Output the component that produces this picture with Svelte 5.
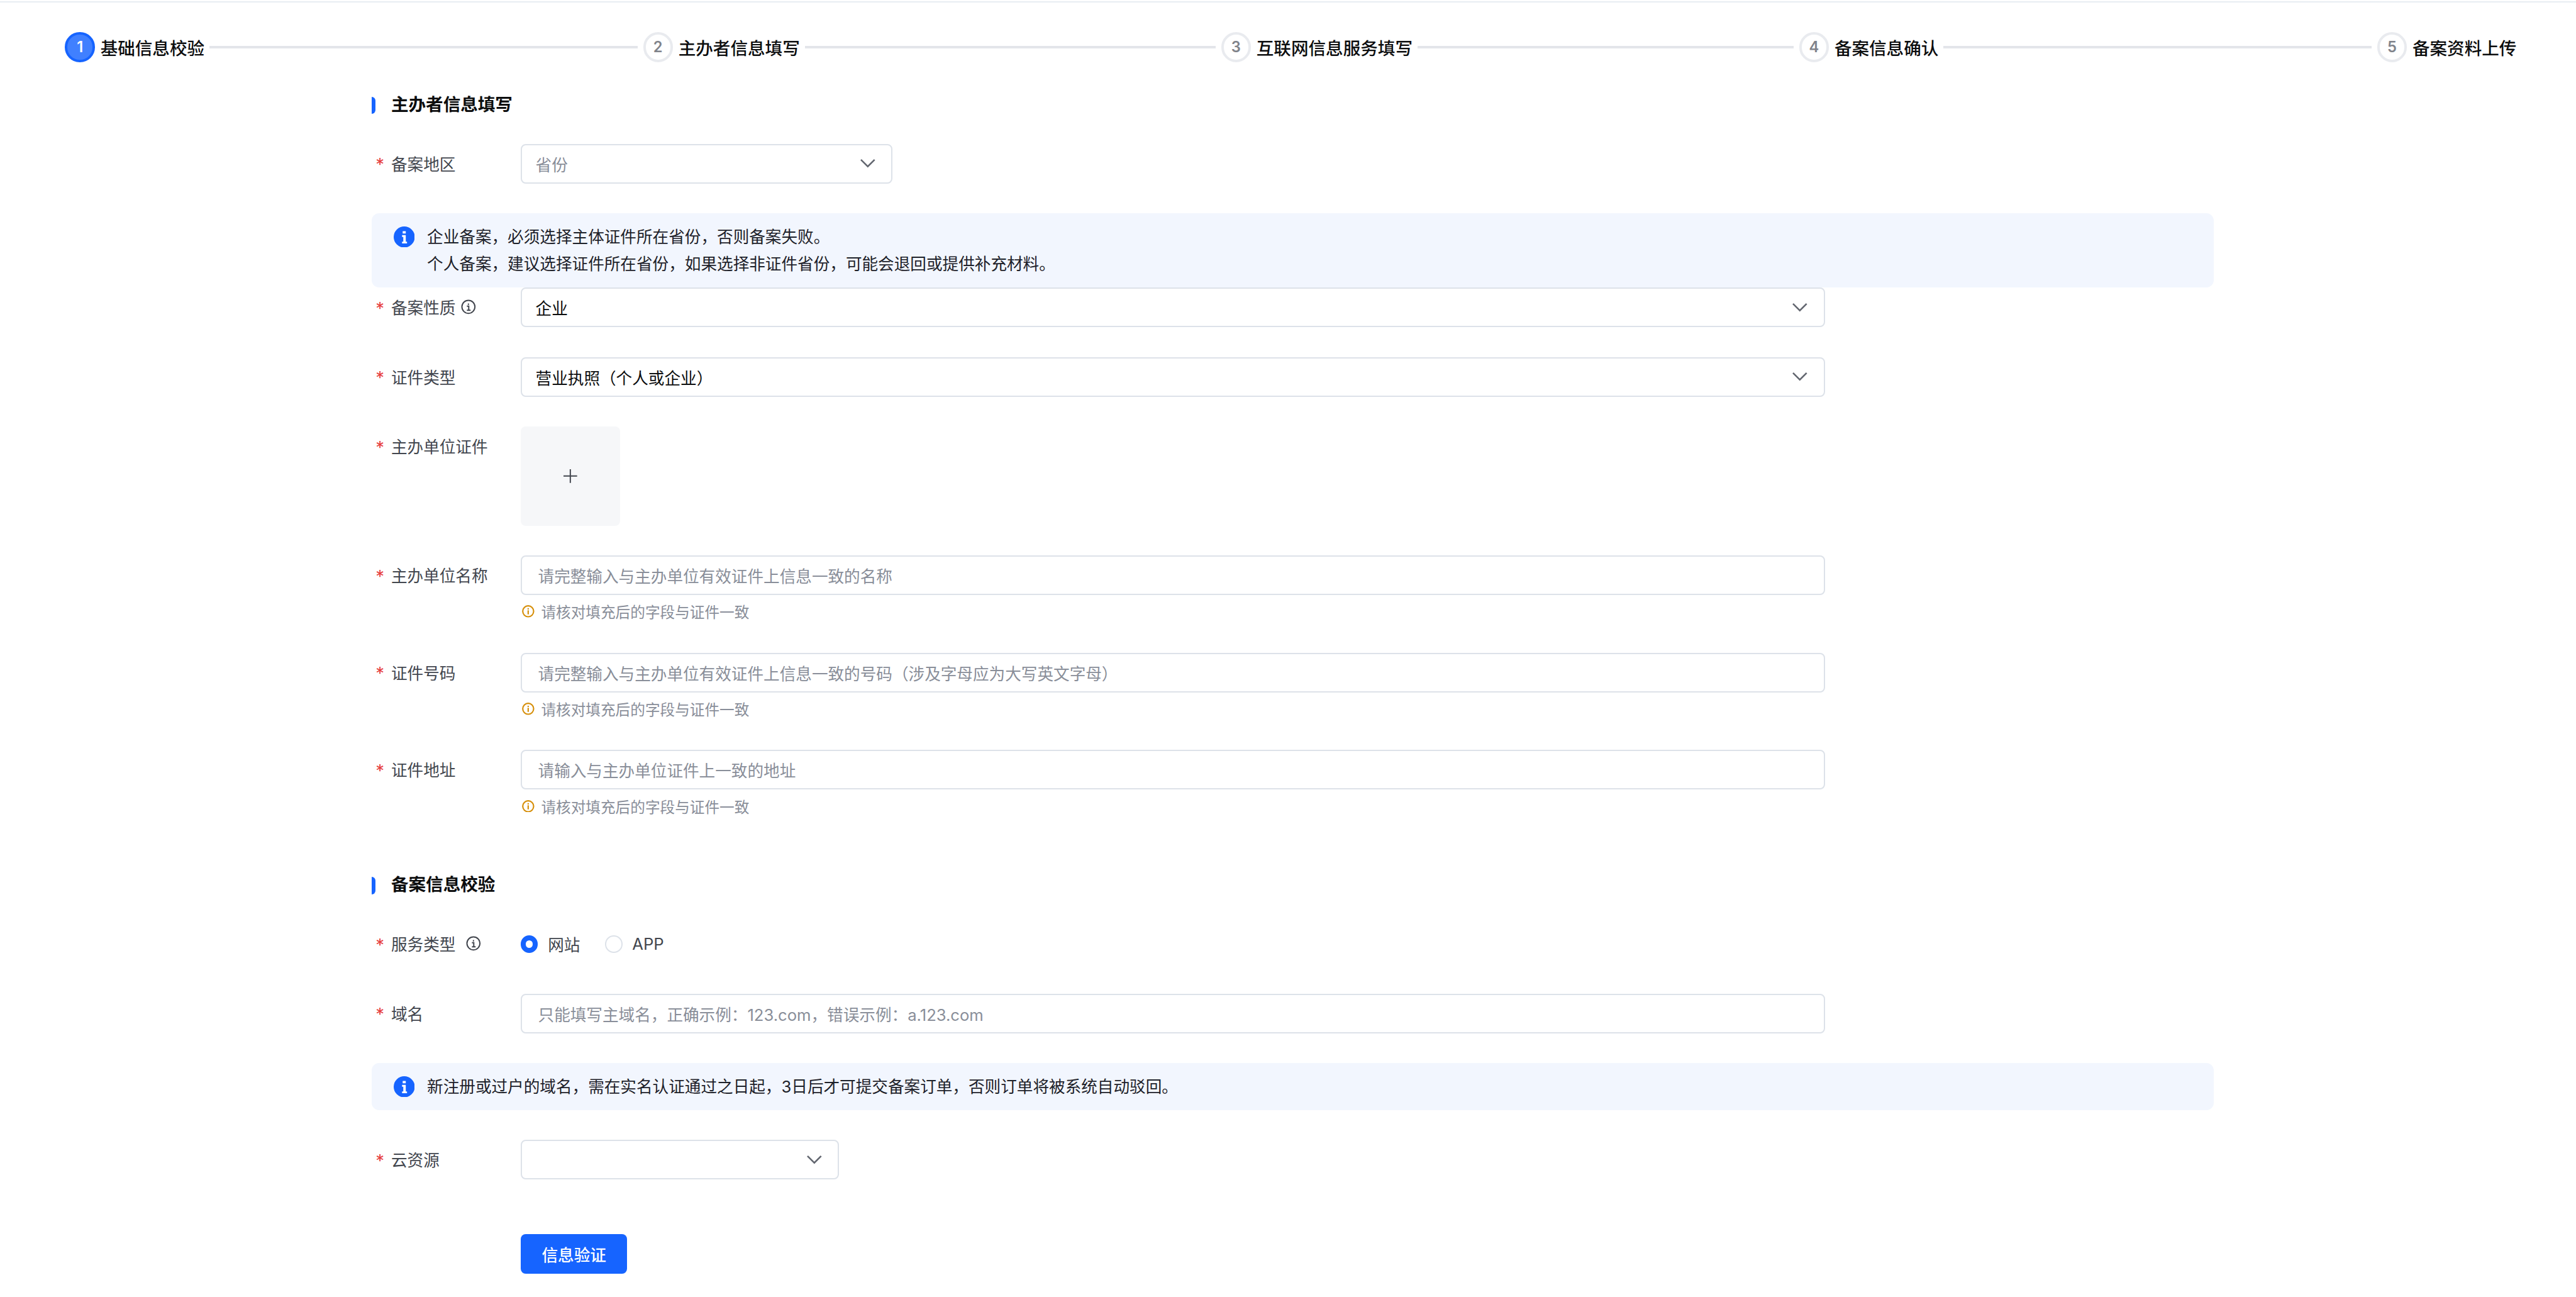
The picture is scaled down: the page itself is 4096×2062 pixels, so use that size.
<script>
  const steps = ["基础信息校验", "主办者信息填写", "互联网信息服务填写", "备案信息确认", "备案资料上传"]
  const hint = "请核对填充后的字段与证件一致"
</script>

{#snippet chevron()}
  <svg class="chevron" viewBox="0 0 24 24" fill="none" stroke="#62666f" stroke-width="2.6">
    <path d="M1 6l11 11L23 6" />
  </svg>
{/snippet}

{#snippet infoFilled()}
  <svg class="alert-icon" viewBox="0 0 34 34">
    <circle cx="17" cy="17" r="17" fill="#1664ff" />
    <path d="M14.5 7.5h5v4h-5zM13.5 14h6v10.5h2v3h-8v-3h2v-7.5h-2z" fill="#fff" />
  </svg>
{/snippet}

{#snippet infoOutline(wide)}
  <svg class="info" class:wide viewBox="0 0 24 24" fill="none" stroke="#42464e" stroke-width="2">
    <circle cx="12" cy="12" r="10.5" />
    <path d="M12 6.5v2.5M9.5 11H12.5V17M9.5 17.5h6" />
  </svg>
{/snippet}

{#snippet fieldHint()}
  <div class="hint">
    <svg class="hint-icon" viewBox="0 0 20 20" fill="none" stroke="#d68f0a" stroke-width="2.2">
      <circle cx="10" cy="10" r="8.8" />
      <path d="M10 5v2M10 8.5v6.5" />
    </svg>
    <span>{hint}</span>
  </div>
{/snippet}

<div class="page">
  <div class="topbar"></div>

  <div class="steps">
    {#each steps as step, i}
      <div class="step" class:last={i === steps.length - 1}>
        <span class="num" class:active={i === 0}>{i + 1}</span>
        <span class="step-text">{step}</span>
        {#if i < steps.length - 1}<span class="line"></span>{/if}
      </div>
    {/each}
  </div>

  <div class="form">
    <h3 class="title">主办者信息填写</h3>

    <div class="row">
      <div class="label"><i>*</i>备案地区</div>
      <div class="select short placeholder"><span>省份</span>{@render chevron()}</div>
    </div>

    <div class="alert">
      {@render infoFilled()}
      <div>
        <div>企业备案，必须选择主体证件所在省份，否则备案失败。</div>
        <div>个人备案，建议选择证件所在省份，如果选择非证件省份，可能会退回或提供补充材料。</div>
      </div>
    </div>

    <div class="row">
      <div class="label"><i>*</i>备案性质{@render infoOutline(false)}</div>
      <div class="select"><span>企业</span>{@render chevron()}</div>
    </div>

    <div class="row">
      <div class="label"><i>*</i>证件类型</div>
      <div class="select"><span>营业执照（个人或企业）</span>{@render chevron()}</div>
    </div>

    <div class="row">
      <div class="label"><i>*</i>主办单位证件</div>
      <div class="upload">
        <svg viewBox="0 0 22 22" fill="none" stroke="#42464e" stroke-width="2">
          <path d="M11 0v22M0 11h22" />
        </svg>
      </div>
    </div>

    <div class="row">
      <div class="label"><i>*</i>主办单位名称</div>
      <div class="field">
        <div class="input placeholder">请完整输入与主办单位有效证件上信息一致的名称</div>
        {@render fieldHint()}
      </div>
    </div>

    <div class="row">
      <div class="label"><i>*</i>证件号码</div>
      <div class="field">
        <div class="input placeholder">请完整输入与主办单位有效证件上信息一致的号码（涉及字母应为大写英文字母）</div>
        {@render fieldHint()}
      </div>
    </div>

    <div class="row">
      <div class="label"><i>*</i>证件地址</div>
      <div class="field">
        <div class="input placeholder">请输入与主办单位证件上一致的地址</div>
        {@render fieldHint()}
      </div>
    </div>

    <h3 class="title second">备案信息校验</h3>

    <div class="row">
      <div class="label"><i>*</i>服务类型{@render infoOutline(true)}</div>
      <div class="radios">
        <span class="radio checked"></span><span class="radio-text">网站</span>
        <span class="radio"></span><span class="radio-text">APP</span>
      </div>
    </div>

    <div class="row">
      <div class="label"><i>*</i>域名</div>
      <div class="input placeholder">只能填写主域名，正确示例：123.com，错误示例：a.123.com</div>
    </div>

    <div class="alert single">
      {@render infoFilled()}
      <div>新注册或过户的域名，需在实名认证通过之日起，3日后才可提交备案订单，否则订单将被系统自动驳回。</div>
    </div>

    <div class="row last">
      <div class="label"><i>*</i>云资源</div>
      <div class="select cloud"><span></span>{@render chevron()}</div>
    </div>

    <div class="actions">
      <button type="button">信息验证</button>
    </div>
  </div>
</div>

<style>
  :global(body) {
    margin: 0;
    background: #fff;
  }

  .page {
    zoom: 0.9856;
    height: 2092px;
    overflow: hidden;
    font-family: Inter, "Noto Sans CJK SC", sans-serif;
    font-size: 26px;
    color: #0c0d0e;
  }

  .topbar {
    height: 2px;
    margin-top: 2px;
    background: #e8edf2;
  }

  .steps {
    display: flex;
    padding: 48px 96px 0 105px;
  }

  .step {
    flex: 1 1 0;
    display: flex;
    align-items: center;
    height: 48px;
  }

  .step.last {
    flex: none;
  }

  /* border widths get floored under zoom, hence the .1 */
  .num {
    box-sizing: border-box;
    width: 48px;
    height: 48px;
    flex: none;
    border: 4.1px solid #e9ebef;
    border-radius: 50%;
    display: flex;
    align-items: center;
    justify-content: center;
    font-size: 24px;
    font-weight: 600;
    color: #80838a;
  }

  .num.active {
    background: #4080ff;
    border-color: #1664ff;
    color: #fff;
  }

  .step-text {
    margin-left: 9px;
    font-size: 28px;
    font-weight: 500;
    white-space: nowrap;
  }

  .line {
    flex: 1;
    height: 4px;
    margin: 0 9px 0 8px;
    background: #e3e5ea;
  }

  .form {
    width: 2971px;
    margin-left: 600px;
    padding-top: 56px;
  }

  .title {
    position: relative;
    margin: 0 0 48px;
    height: 28px;
    padding-left: 31px;
    font-size: 28px;
    line-height: 26px;
    font-weight: 600;
    color: #0c0d0e;
  }

  .title::before {
    content: "";
    position: absolute;
    left: 0;
    top: 0;
    width: 6px;
    height: 28px;
    background: #1664ff;
    border-radius: 0 6px 6px 0;
  }

  .title.second {
    margin-top: 96px;
  }

  .row {
    display: flex;
    margin-bottom: 48px;
  }

  .row.last {
    margin-bottom: 0;
  }

  .label {
    position: relative;
    flex: none;
    box-sizing: border-box;
    width: 240px;
    height: 64px;
    padding: 0 0 2px 31px;
    display: flex;
    align-items: center;
    color: #42464e;
    white-space: nowrap;
  }

  .label i {
    position: absolute;
    left: 6px;
    top: 20px;
    font-style: normal;
    font-size: 28px;
    line-height: 28px;
    color: #e63f3f;
  }

  .info {
    width: 24px;
    height: 24px;
    margin-left: 9px;
  }

  .info.wide {
    margin-left: 17px;
  }

  .select,
  .input {
    box-sizing: border-box;
    width: 2104px;
    height: 64px;
    border: 2.1px solid #dde2e9;
    border-radius: 8px;
    display: flex;
    align-items: center;
    white-space: nowrap;
  }

  .select {
    justify-content: space-between;
    padding: 0 26px 0 22px;
  }

  .input {
    padding: 0 26px;
  }

  .select.short {
    width: 600px;
  }

  .select.cloud {
    width: 514px;
  }

  .placeholder {
    color: #898e99;
  }

  .chevron {
    width: 24px;
    height: 24px;
  }

  .upload {
    width: 160px;
    height: 160px;
    border-radius: 8px;
    background: #f6f7f9;
    display: flex;
    align-items: center;
    justify-content: center;
  }

  .upload svg {
    width: 22px;
    height: 22px;
  }

  .hint {
    box-sizing: border-box;
    height: 45px;
    padding: 8px 0 0 2px;
    display: flex;
    align-items: center;
    font-size: 24px;
    color: #898e99;
  }

  .hint-icon {
    width: 20px;
    height: 20px;
    margin-right: 11px;
  }

  .alert {
    box-sizing: border-box;
    width: 2971px;
    padding: 16px 35px;
    display: flex;
    gap: 20px;
    background: #f2f6fe;
    border-radius: 12px;
    line-height: 44px;
    color: #1d2129;
  }

  .alert.single {
    margin-bottom: 48px;
  }

  .alert-icon {
    width: 34px;
    height: 34px;
    flex: none;
    margin-top: 5px;
  }

  .radios {
    height: 64px;
    display: flex;
    align-items: center;
    color: #42464e;
  }

  .radio {
    box-sizing: border-box;
    width: 28px;
    height: 28px;
    border: 2.1px solid #dde2e9;
    border-radius: 50%;
  }

  .radio.checked {
    border: 8.2px solid #1664ff;
    background: #fff;
  }

  .radio-text {
    margin: 0 40px 0 16px;
  }

  .actions {
    margin: 88px 0 0 240px;
  }

  button {
    width: 172px;
    height: 64px;
    border: none;
    border-radius: 8px;
    background: #1664ff;
    color: #fff;
    font: 500 26px Inter, "Noto Sans CJK SC", sans-serif;
  }
</style>
